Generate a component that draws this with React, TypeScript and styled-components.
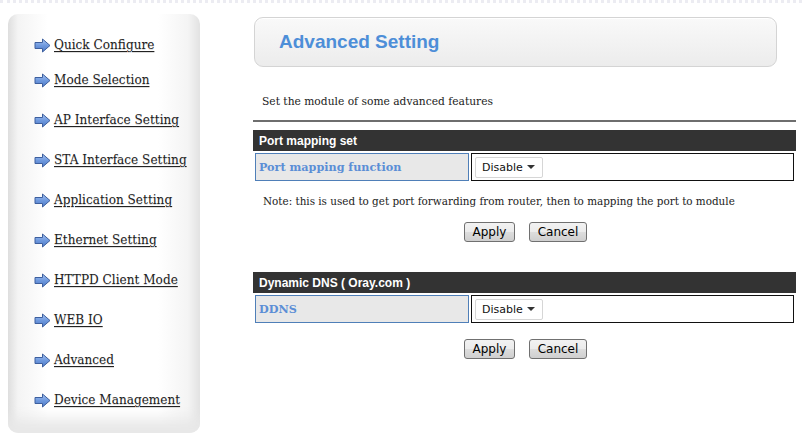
import React from "react";
import styled, { createGlobalStyle } from "styled-components";

const GlobalStyle = createGlobalStyle`
  html, body {
    margin: 0;
    padding: 0;
    background: #ffffff;
  }
  body {
    font-family: "DejaVu Serif", Georgia, serif;
    color: #222;
  }
`;

const Page = styled.div`
  width: 802px;
  height: 443px;
  display: flex;
  align-items: flex-start;
  box-sizing: border-box;
  border-top: 3px dotted #ececf2;
`;

const Sidebar = styled.nav`
  margin: 11px 0 0 8px;
  width: 192px;
  height: 419px;
  box-sizing: border-box;
  border-radius: 10px;
  background: linear-gradient(
    to right,
    #dedede 0px,
    #f4f4f4 10px,
    #ffffff 40px,
    #ffffff 150px,
    #f4f4f4 180px,
    #e2e2e2 192px
  );
  box-shadow: inset 0 -30px 14px -16px #e8e8e8;
  padding: 21px 0 0 26px;
  display: flex;
  flex-direction: column;
`;

const NavItem = styled.a<{ $first?: boolean }>`
  display: flex;
  align-items: center;
  gap: 3px;
  height: 20px;
  margin-bottom: ${(p) => (p.$first ? "15px" : "20px")};
  color: #222;
  font-size: 12.1px;
  text-decoration: underline;
  text-underline-offset: 2px;
  cursor: pointer;
  white-space: nowrap;
  text-shadow: 0 1px 0 #ddd;
`;

const Arrow = () => (
  <svg width="17" height="15" viewBox="0 0 17 15">
    <defs>
      <linearGradient id="arrowFill" x1="0" y1="0" x2="0" y2="1">
        <stop offset="0" stopColor="#a9c6f2" />
        <stop offset="0.5" stopColor="#6f99de" />
        <stop offset="1" stopColor="#4d79c6" />
      </linearGradient>
    </defs>
    <path
      d="M1 4.5 H8.5 V1 L16 7.5 L8.5 14 V10.5 H1 Z"
      fill="url(#arrowFill)"
      stroke="#3d5f9e"
      strokeWidth="1"
      strokeLinejoin="round"
    />
  </svg>
);

const Main = styled.main`
  margin-left: 53px;
  width: 543px;
  padding-top: 14px;
  display: flex;
  flex-direction: column;
`;

const TitleBox = styled.div`
  margin-left: 1px;
  width: 523px;
  height: 50px;
  box-sizing: border-box;
  border: 1px solid #d4d4d4;
  border-radius: 9px;
  background: linear-gradient(to bottom, #f9f9f9, #ececec);
  box-shadow: inset 0 1px 0 #fff;
  display: flex;
  align-items: center;
  padding-left: 24px;
`;

const Title = styled.h1`
  margin: 0;
  font-family: "Liberation Sans", Arial, sans-serif;
  font-size: 19px;
  font-weight: bold;
  color: #4d8ed8;
`;

const Intro = styled.p`
  margin: 27px 0 0 9px;
  font-size: 10.7px;
  line-height: 16px;
  height: 16px;
`;

const Rule = styled.hr`
  margin: 10px 0 0 0;
  border: 0;
  height: 2px;
  background: #6e6e6e;
`;

const SectionBar = styled.div<{ $top: number }>`
  margin-top: ${(p) => p.$top}px;
  height: 21px;
  background: #333333;
  color: #fff;
  font-family: "Liberation Sans", Tahoma, sans-serif;
  font-weight: bold;
  font-size: 12px;
  display: flex;
  align-items: center;
  padding-left: 6px;
`;

const Row = styled.div`
  display: grid;
  grid-template-columns: 214px 1fr;
  gap: 2px;
  padding: 2px 2px 0 2px;
  height: 28px;
  box-sizing: content-box;
`;

const LabelCell = styled.div`
  background: #e8e8e8;
  border: 1px solid #4f7fb8;
  display: flex;
  align-items: center;
  padding-left: 3px;
  color: #5b8ed6;
  font-weight: bold;
  font-size: 11.2px;
`;

const ValueCell = styled.div`
  border: 1px solid #111;
  display: flex;
  align-items: center;
  padding-left: 3px;
`;

const Select = styled.div`
  width: 68px;
  height: 21px;
  box-sizing: border-box;
  border: 1px solid #d6d6d6;
  border-radius: 2px;
  background: #fff;
  display: flex;
  align-items: center;
  justify-content: space-between;
  padding: 0 7px 0 6px;
  font-family: "DejaVu Sans", Tahoma, sans-serif;
  font-size: 11px;
  color: #111;
`;

const Caret = styled.span`
  width: 0;
  height: 0;
  border-left: 4px solid transparent;
  border-right: 4px solid transparent;
  border-top: 4px solid #333;
`;

const Note = styled.p`
  margin: 12px 0 0 10px;
  font-size: 10.4px;
  line-height: 16px;
`;

const Buttons = styled.div<{ $top: number }>`
  margin-top: ${(p) => p.$top}px;
  display: flex;
  justify-content: center;
  gap: 14px;
  padding-left: 2px;
`;

const Button = styled.button<{ $w: number }>`
  width: ${(p) => p.$w}px;
  height: 20px;
  box-sizing: border-box;
  border: 1px solid #707070;
  border-radius: 3px;
  background: linear-gradient(to bottom, #f2f2f2 0%, #ebebeb 50%, #dddddd 51%, #cfcfcf 100%);
  font-family: "DejaVu Sans", Tahoma, sans-serif;
  font-size: 12px;
  color: #000;
  padding: 0;
  cursor: pointer;
`;

const navItems = [
  "Quick Configure",
  "Mode Selection",
  "AP Interface Setting",
  "STA Interface Setting",
  "Application Setting",
  "Ethernet Setting",
  "HTTPD Client Mode",
  "WEB IO",
  "Advanced",
  "Device Management",
];

const SettingRow = ({ label }: { label: string }) => (
  <Row>
    <LabelCell>{label}</LabelCell>
    <ValueCell>
      <Select>
        Disable
        <Caret />
      </Select>
    </ValueCell>
  </Row>
);

export default function App() {
  return (
    <>
      <GlobalStyle />
      <Page>
        <Sidebar>
          {navItems.map((item, i) => (
            <NavItem key={item} $first={i === 0}>
              <Arrow />
              <span>{item}</span>
            </NavItem>
          ))}
        </Sidebar>
        <Main>
          <TitleBox>
            <Title>Advanced Setting</Title>
          </TitleBox>
          <Intro>Set the module of some advanced features</Intro>
          <Rule />
          <SectionBar $top={8}>Port mapping set</SectionBar>
          <SettingRow label="Port mapping function" />
          <Note>
            Note: this is used to get port forwarding from router, then to
            mapping the port to module
          </Note>
          <Buttons $top={13}>
            <Button $w={51}>Apply</Button>
            <Button $w={58}>Cancel</Button>
          </Buttons>
          <SectionBar $top={30}>Dynamic DNS ( Oray.com )</SectionBar>
          <SettingRow label="DDNS" />
          <Buttons $top={16}>
            <Button $w={51}>Apply</Button>
            <Button $w={58}>Cancel</Button>
          </Buttons>
        </Main>
      </Page>
    </>
  );
}
